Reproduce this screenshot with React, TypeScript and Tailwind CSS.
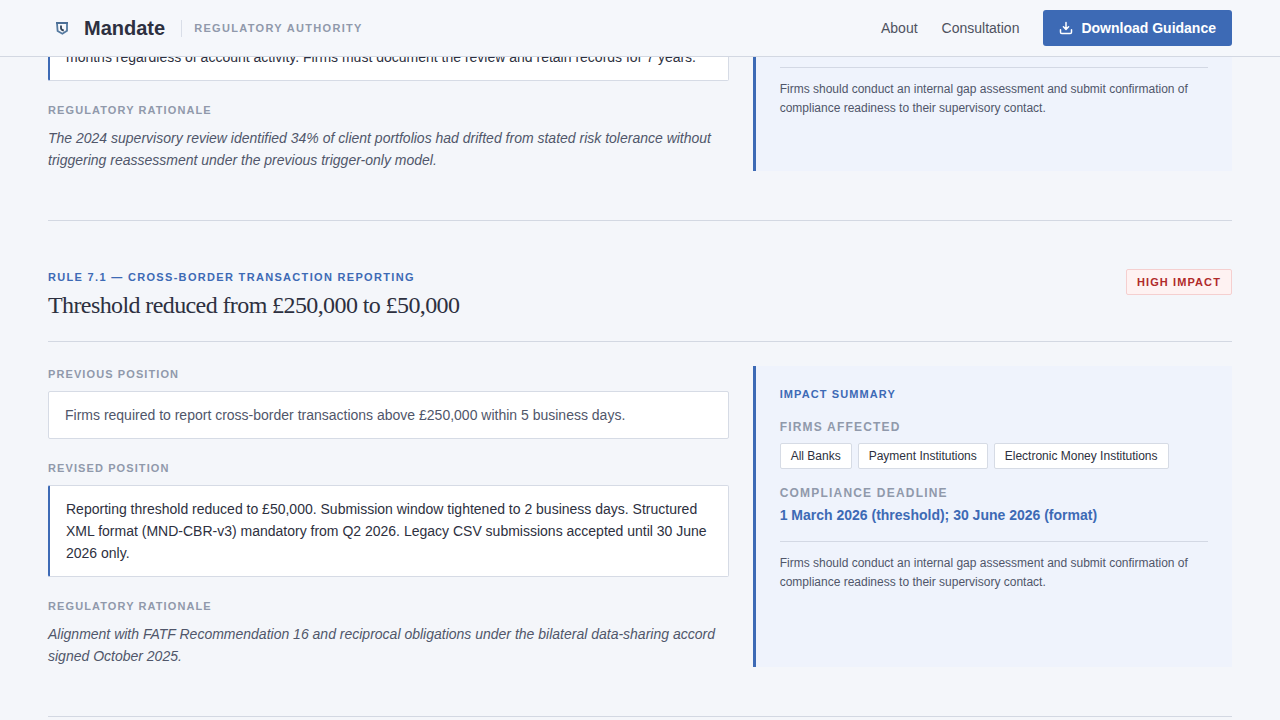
import type { ReactNode } from "react";

function Logo() {
  return (
    <svg width="28" height="28" viewBox="0 0 28 28" fill="none" aria-hidden="true">
      <path d="M9 9h10v7.8l-4.6 3L9.6 17z" stroke="#54799f" strokeWidth="1.8" />
      <path d="M8 8.9h12" stroke="#4a6d95" strokeWidth="1.8" />
      <path d="M13 11.5v2.6c0 1.5.8 2.1 2.8 2.4" stroke="#2f4259" strokeWidth="1.8" />
    </svg>
  );
}

function DownloadIcon() {
  return (
    <svg width="14" height="14" viewBox="0 0 14 14" fill="none" stroke="currentColor" strokeWidth="1.5" strokeLinecap="round" strokeLinejoin="round" aria-hidden="true">
      <path d="M7 1.5v6.8M4.4 5.8 7 8.4l2.6-2.6" />
      <path d="M1.5 8.8v2.4c0 .8.5 1.3 1.3 1.3h8.4c.8 0 1.3-.5 1.3-1.3V8.8" />
    </svg>
  );
}

function Header() {
  return (
    <header className="sticky top-0 z-10 flex h-[57px] items-center justify-between border-b border-[#d3d8e2] bg-[#f5f7fb] px-12">
      <div className="flex items-center">
        <a href="#" className="flex items-center gap-2 text-xl font-bold text-[#2d3040]">
          <Logo />
          Mandate
        </a>
        <div className="ml-4 border-l border-[#d9dee8] pl-3 text-[11px] leading-[17px] font-bold tracking-[0.12em] text-[#9099ab] uppercase">
          Regulatory Authority
        </div>
      </div>
      <nav className="flex items-center gap-6 text-sm text-[#4e5260]">
        <a href="#about">About</a>
        <a href="#consultation">Consultation</a>
        <button type="button" className="flex h-9 items-center gap-2 rounded-[3px] bg-[#3d6ab5] px-4 font-bold text-white">
          <DownloadIcon />
          Download Guidance
        </button>
      </nav>
    </header>
  );
}

function Block({ label, children }: { label: string; children: ReactNode }) {
  return (
    <div>
      <h3 className="mb-2 text-[11px] leading-[17px] font-bold tracking-widest text-[#9099ab] uppercase">{label}</h3>
      {children}
    </div>
  );
}

function Revised({ children }: { children: ReactNode }) {
  return (
    <p className="rounded-[2px] border border-l-2 border-[#d6dbe5] border-l-[#3d6ab5] bg-white px-4 py-3 text-sm leading-[22px] text-[#2d3040]">
      {children}
    </p>
  );
}

function Rationale({ children }: { children: ReactNode }) {
  return <p className="text-sm leading-[22px] text-[#50566a] italic">{children}</p>;
}

function Impact({ children }: { children?: ReactNode }) {
  return (
    <aside className="col-span-5 border-l-[3px] border-[#3d6ab5] bg-[#eff3fc] px-6 py-5">
      {children}
      <p className="mt-[14px] border-t border-[#d3d8e4] pt-3 text-xs leading-[19px] text-[#50566a]">
        Firms should conduct an internal gap assessment and submit confirmation of compliance readiness to their
        supervisory contact.
      </p>
    </aside>
  );
}

const firms = ["All Banks", "Payment Institutions", "Electronic Money Institutions"];

export default function App() {
  return (
    <div className="min-h-screen bg-[#f4f6fa] font-['Liberation_Sans',sans-serif]">
      <Header />
      <main className="-mt-6 px-12">
        <article className="border-b border-[#d3d8e2] pb-[49px]">
          <div className="grid grid-cols-12 gap-6">
            <div className="col-span-7 flex flex-col gap-[21px]">
              <Revised>
                months regardless of account activity. Firms must document the review and retain records for 7 years.
              </Revised>
              <Block label="Regulatory Rationale">
                <Rationale>
                  The 2024 supervisory review identified 34% of client portfolios had drifted from stated risk tolerance
                  without triggering reassessment under the previous trigger-only model.
                </Rationale>
              </Block>
            </div>
            <Impact />
          </div>
        </article>

        <article className="border-b border-[#d3d8e2] pt-12 pb-[49px]">
          <div className="mb-6 flex items-start justify-between border-b border-[#d3d8e2] pb-5">
            <div>
              <p className="mb-1 text-[11px] leading-[17px] font-bold tracking-[0.12em] text-[#3d6ab5] uppercase">
                Rule 7.1 — Cross-Border Transaction Reporting
              </p>
              <h2 className="font-['Liberation_Serif',serif] text-2xl leading-[31px] tracking-tight text-[#2d3040]">
                Threshold reduced from £250,000 to £50,000
              </h2>
            </div>
            <span className="rounded-[2px] border border-[#f5cfcf] bg-[#fef2f2] px-[10px] py-1 text-[11px] leading-4 font-bold tracking-widest text-[#b02a2a] uppercase">
              High Impact
            </span>
          </div>

          <div className="grid grid-cols-12 gap-6">
            <div className="col-span-7 flex flex-col gap-[21px]">
              <Block label="Previous Position">
                <p className="rounded-[2px] border border-[#d6dbe5] bg-white px-4 py-3 text-sm leading-[22px] text-[#50566a]">
                  Firms required to report cross-border transactions above £250,000 within 5 business days.
                </p>
              </Block>
              <Block label="Revised Position">
                <Revised>
                  Reporting threshold reduced to £50,000. Submission window tightened to 2 business days. Structured XML
                  format (MND-CBR-v3) mandatory from Q2 2026. Legacy CSV submissions accepted until 30 June 2026 only.
                </Revised>
              </Block>
              <Block label="Regulatory Rationale">
                <Rationale>
                  Alignment with FATF Recommendation 16 and reciprocal obligations under the bilateral data-sharing
                  accord signed October 2025.
                </Rationale>
              </Block>
            </div>
            <Impact>
              <h3 className="mb-4 text-[11px] leading-[17px] font-bold tracking-widest text-[#3d6ab5] uppercase">
                Impact Summary
              </h3>
              <h4 className="mb-2 text-xs font-bold tracking-widest text-[#9099ab] uppercase">Firms Affected</h4>
              <ul className="mb-4 flex flex-wrap gap-[6px]">
                {firms.map((firm) => (
                  <li key={firm} className="rounded-[2px] border border-[#d6dbe5] bg-white px-[10px] py-1 text-xs text-[#2d3040]">
                    {firm}
                  </li>
                ))}
              </ul>
              <h4 className="mb-[3px] text-xs font-bold tracking-widest text-[#9099ab] uppercase">Compliance Deadline</h4>
              <p className="text-sm leading-[23px] font-bold text-[#3d6ab5]">
                1 March 2026 (threshold); 30 June 2026 (format)
              </p>
            </Impact>
          </div>
        </article>
      </main>
    </div>
  );
}
